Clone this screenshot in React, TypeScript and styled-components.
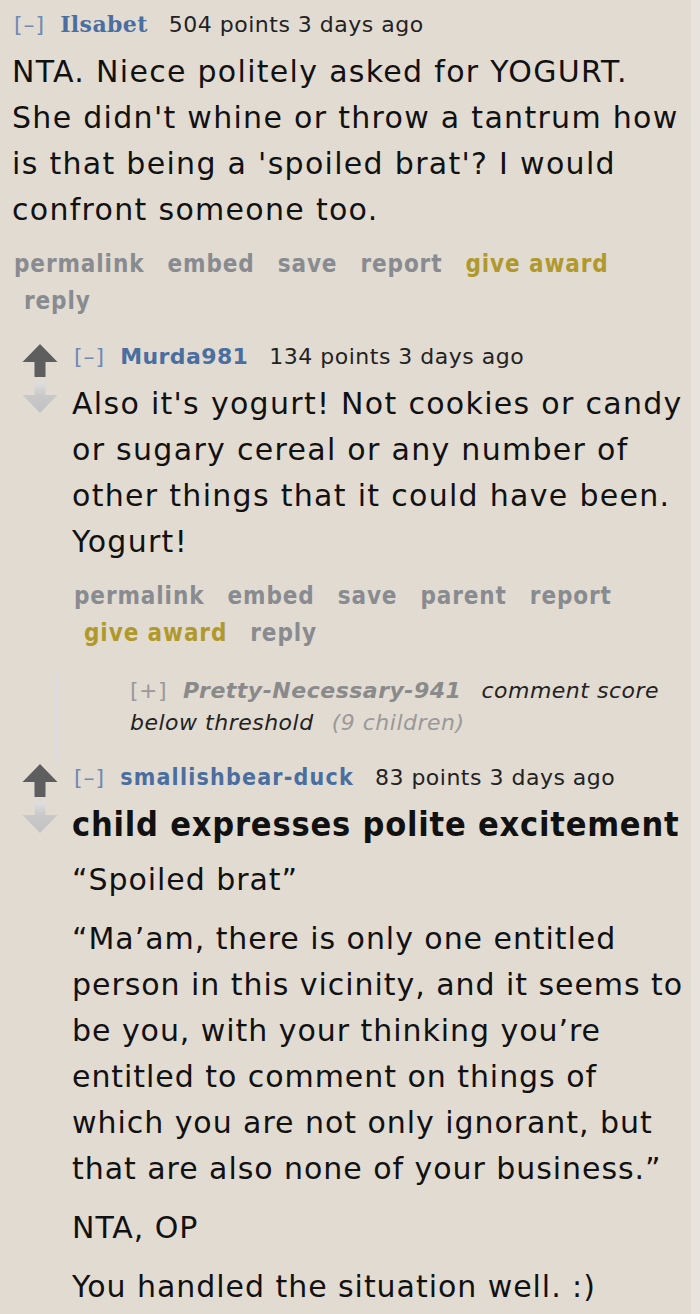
import React from "react";
import styled, { createGlobalStyle } from "styled-components";

const GlobalStyle = createGlobalStyle`
  html, body {
    margin: 0;
    padding: 0;
    background: #e2dbd2;
  }
`;

const Page = styled.div`
  min-height: 1314px;
  padding: 11px 0 0 12px;
  box-sizing: border-box;
  background: linear-gradient(to right, #e2dbd2 691px, #e8e3dc 691px);
  overflow: hidden;
`;

const Comment = styled.div`
  display: flex;
  align-items: flex-start;
`;

const Midcol = styled.div`
  width: 36px;
  margin: 0 14px 0 10px;
  display: flex;
  flex-direction: column;
  gap: 5px;
  flex-shrink: 0;
`;

const Entry = styled.div`
  flex: 1;
  min-width: 0;
`;

const Tagline = styled.div`
  font-family: "DejaVu Sans", Verdana, sans-serif;
  font-size: 22px;
  line-height: 26px;
  color: #222;
  white-space: nowrap;
  padding-left: 2px;
`;

const Expand = styled.span`
  color: #7189b3;
  margin-right: 15px;
  letter-spacing: 1px;
`;

const Author = styled.span<{ $face: "serif" | "sans" | "narrow" }>`
  color: #4a6e9f;
  font-weight: bold;
  margin-right: 21px;
  font-family: ${(p) =>
    p.$face === "serif"
      ? `"DejaVu Serif", "Liberation Serif", serif`
      : p.$face === "narrow"
      ? `"DejaVu Sans Condensed", "DejaVu Sans", sans-serif`
      : `"DejaVu Sans", sans-serif`};
  font-stretch: ${(p) => (p.$face === "narrow" ? "condensed" : "normal")};
  font-size: ${(p) => (p.$face === "narrow" ? "23px" : "22px")};
  letter-spacing: ${(p) => (p.$face === "narrow" ? "1.2px" : "0.4px")};
`;

const Score = styled.span`
  letter-spacing: 0.5px;
`;

const Body = styled.div<{ $spacing: number; $tight?: boolean }>`
  font-family: "DejaVu Sans", Verdana, sans-serif;
  font-size: 30px;
  letter-spacing: ${(p) => p.$spacing}px;
  line-height: 46px;
  color: #111;
  margin-top: ${(p) => (p.$tight ? 0 : 11)}px;
  padding-right: ${(p) => (p.$tight ? 10 : 4)}px;
`;

const Para = styled.p`
  margin: 0 0 13px;
  &:last-child {
    margin-bottom: 0;
  }
`;

const Title = styled.div`
  font-family: "DejaVu Sans Condensed", "DejaVu Sans", sans-serif;
  font-stretch: condensed;
  font-weight: bold;
  font-size: 34px;
  letter-spacing: 0.8px;
  line-height: 46px;
  color: #111;
  margin: 10px 0 10px;
  white-space: nowrap;
`;

const Buttons = styled.ul`
  list-style: none;
  margin: 13px 0 0;
  padding: 0 40px 0 2px;
  font-family: "DejaVu Sans Condensed", "DejaVu Sans", sans-serif;
  font-stretch: condensed;
  font-weight: bold;
  font-size: 24px;
  letter-spacing: 0.9px;
  line-height: 37px;
`;

const Button = styled.li<{ $gold?: boolean }>`
  display: inline-block;
  padding-right: 13px;
  color: ${(p) => (p.$gold ? "#b0992c" : "#888b8f")};
  & + & {
    padding-left: 10px;
  }
`;

const Replies = styled.div`
  margin-top: 24px;
`;

const ChildBlock = styled.div`
  margin: 22px 0 3px -16px;
  border-left: 2px solid #dadbe6;
  padding: 1px 20px 22px 72px;
  font-family: "DejaVu Sans", Verdana, sans-serif;
  font-style: italic;
  font-size: 22px;
  letter-spacing: 0.5px;
  line-height: 32px;
  color: #222;
`;

const Collapsed = styled.span`
  color: #999;
  font-style: normal;
  margin-right: 16px;
`;

const GrayAuthor = styled.span`
  color: #8a8a8a;
  font-weight: bold;
  margin-right: 20px;
`;

const Note = styled.span`
  white-space: nowrap;
`;

const Children = styled.span`
  color: #999;
  margin-left: 18px;
  white-space: nowrap;
`;

const Arrow = ({ up }: { up?: boolean }) =>
  up ? (
    <svg width="36" height="33" viewBox="0 0 36 33">
      <path d="M18 0 L35.5 18 L23.5 18 L23.5 33 L12.5 33 L12.5 18 L0.5 18 Z" fill="#5e5e5e" />
    </svg>
  ) : (
    <svg width="36" height="31" viewBox="0 0 36 31">
      <defs>
        <linearGradient id="dn" x1="0" y1="0" x2="0" y2="1">
          <stop offset="0" stopColor="#e0dede" />
          <stop offset="0.45" stopColor="#c8c8c8" />
          <stop offset="1" stopColor="#c2c2c2" />
        </linearGradient>
      </defs>
      <path d="M12.5 0 L23.5 0 L23.5 13 L35.5 13 L18 31 L0.5 13 L12.5 13 Z" fill="url(#dn)" />
    </svg>
  );

const Votes = () => (
  <Midcol>
    <Arrow up />
    <Arrow />
  </Midcol>
);

type Action = { label: string; gold?: boolean };

const ActionList = ({ items }: { items: Action[] }) => (
  <Buttons>
    {items.map((a) => (
      <Button key={a.label} $gold={a.gold}>
        {a.label}
      </Button>
    ))}
  </Buttons>
);

export default function App() {
  return (
    <>
      <GlobalStyle />
      <Page>
        <Entry>
          <Tagline>
            <Expand>[–]</Expand>
            <Author $face="serif">Ilsabet</Author>
            <Score>504 points 3 days ago</Score>
          </Tagline>
          <Body $spacing={1.3}>
            NTA. Niece politely asked for YOGURT. She didn't whine or throw a tantrum how is that being a
            'spoiled brat'? I would confront someone too.
          </Body>
          <ActionList
            items={[
              { label: "permalink" },
              { label: "embed" },
              { label: "save" },
              { label: "report" },
              { label: "give award", gold: true },
              { label: "reply" },
            ]}
          />
        </Entry>

        <Replies>
          <Comment>
            <Votes />
            <Entry>
              <Tagline>
                <Expand>[–]</Expand>
                <Author $face="sans">Murda981</Author>
                <Score>134 points 3 days ago</Score>
              </Tagline>
              <Body $spacing={1.3}>
                Also it's yogurt! Not cookies or candy or sugary cereal or any number of other things that it
                could have been. Yogurt!
              </Body>
              <ActionList
                items={[
                  { label: "permalink" },
                  { label: "embed" },
                  { label: "save" },
                  { label: "parent" },
                  { label: "report" },
                  { label: "give award", gold: true },
                  { label: "reply" },
                ]}
              />
              <ChildBlock>
                <Collapsed>[+]</Collapsed>
                <GrayAuthor>Pretty-Necessary-941</GrayAuthor>
                <Note>comment score</Note> <Note>below threshold</Note>
                <Children>(9 children)</Children>
              </ChildBlock>
            </Entry>
          </Comment>

          <Comment>
            <Votes />
            <Entry>
              <Tagline>
                <Expand>[–]</Expand>
                <Author $face="narrow">smallishbear-duck</Author>
                <Score>83 points 3 days ago</Score>
              </Tagline>
              <Title>child expresses polite excitement</Title>
              <Body $spacing={0.95} $tight>
                <Para>“Spoiled brat”</Para>
                <Para>
                  “Ma’am, there is only one entitled person in this vicinity, and it seems to be you, with your
                  thinking you’re entitled to comment on things of which you are not only ignorant, but that are
                  also none of your business.”
                </Para>
                <Para>NTA, OP</Para>
                <Para>You handled the situation well. :)</Para>
              </Body>
            </Entry>
          </Comment>
        </Replies>
      </Page>
    </>
  );
}
